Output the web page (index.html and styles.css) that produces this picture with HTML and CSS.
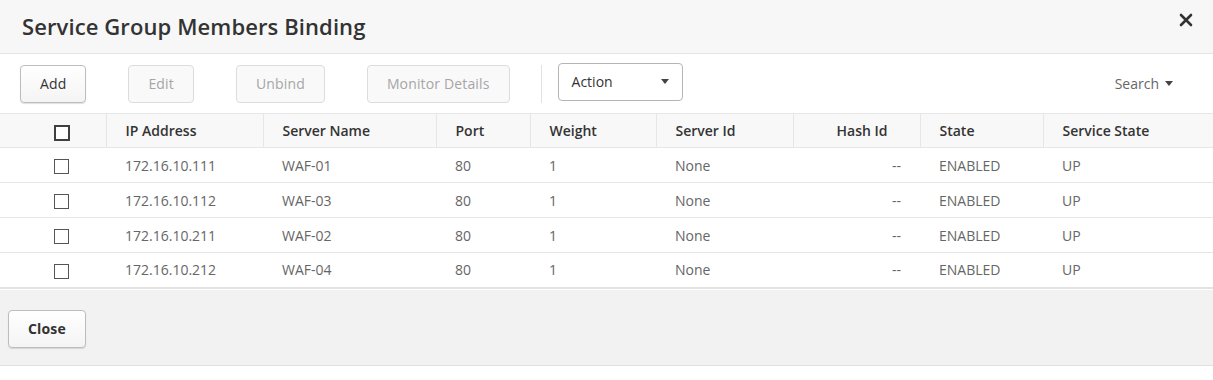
FILE: index.html
```html
<!DOCTYPE html>
<html lang="en">
<head>
    <meta charset="UTF-8">
    <title>Service Group Members Binding</title>
    <link rel="stylesheet" href="styles.css">
</head>
<body>
    <div class="dialog">
        <div class="dialog-header">
            <h1>Service Group Members Binding</h1>
            <svg class="close-icon" width="14" height="14" viewBox="0 0 14 14">
                <path d="M2 2 L12 12 M12 2 L2 12" stroke="#333" stroke-width="2.6" stroke-linecap="round"/>
            </svg>
        </div>
        <div class="toolbar">
            <button class="btn">Add</button>
            <button class="btn" disabled>Edit</button>
            <button class="btn" disabled>Unbind</button>
            <button class="btn" disabled>Monitor Details</button>
            <span class="separator"></span>
            <div class="select">Action<span class="caret"></span></div>
            <div class="search">Search<span class="caret"></span></div>
        </div>
        <table class="grid">
            <colgroup>
                <col class="c-check">
                <col class="c-ip">
                <col class="c-name">
                <col class="c-port">
                <col class="c-weight">
                <col class="c-sid">
                <col class="c-hash">
                <col class="c-state">
                <col>
            </colgroup>
            <thead>
                <tr>
                    <th class="check-cell"><span class="checkbox head"></span></th>
                    <th>IP Address</th>
                    <th>Server Name</th>
                    <th>Port</th>
                    <th>Weight</th>
                    <th>Server Id</th>
                    <th class="num">Hash Id</th>
                    <th>State</th>
                    <th>Service State</th>
                </tr>
            </thead>
            <tbody>
                <tr>
                    <td class="check-cell"><span class="checkbox"></span></td>
                    <td>172.16.10.111</td><td>WAF-01</td><td>80</td><td>1</td><td>None</td><td class="num">--</td><td>ENABLED</td><td>UP</td>
                </tr>
                <tr>
                    <td class="check-cell"><span class="checkbox"></span></td>
                    <td>172.16.10.112</td><td>WAF-03</td><td>80</td><td>1</td><td>None</td><td class="num">--</td><td>ENABLED</td><td>UP</td>
                </tr>
                <tr>
                    <td class="check-cell"><span class="checkbox"></span></td>
                    <td>172.16.10.211</td><td>WAF-02</td><td>80</td><td>1</td><td>None</td><td class="num">--</td><td>ENABLED</td><td>UP</td>
                </tr>
                <tr>
                    <td class="check-cell"><span class="checkbox"></span></td>
                    <td>172.16.10.212</td><td>WAF-04</td><td>80</td><td>1</td><td>None</td><td class="num">--</td><td>ENABLED</td><td>UP</td>
                </tr>
            </tbody>
        </table>
        <div class="dialog-footer">
            <button class="btn strong">Close</button>
        </div>
    </div>
</body>
</html>
```

FILE: styles.css
```css
* {
    margin: 0;
    padding: 0;
    box-sizing: border-box;
}

body {
    background: #fff;
    font-family: 'Open Sans', 'Liberation Sans', sans-serif;
    font-size: 14px;
    color: #333;
}

.dialog-header {
    height: 54px;
    background: #f7f7f7;
    border-bottom: 1px solid #e4e4e4;
    display: flex;
    align-items: center;
    justify-content: space-between;
    padding: 0 20px 2px 22px;
}

.dialog-header h1 {
    font-size: 22px;
    font-weight: 600;
    color: #333;
    letter-spacing: 0.1px;
}

.close-icon {
    margin-top: -12px;
}

.toolbar {
    height: 59px;
    display: flex;
    align-items: center;
    padding: 0 40px 0 20px;
}

.btn {
    height: 38px;
    padding: 0 19px;
    margin-right: 42px;
    font-family: inherit;
    font-size: 14px;
    letter-spacing: 0.15px;
    color: #333;
    background: linear-gradient(#fff, #f4f4f4);
    border: 1px solid #bdbdbd;
    border-radius: 4px;
    box-shadow: 0 1px 1px rgba(0, 0, 0, 0.12);
}

.btn:disabled {
    color: #a6a6a6;
    background: #f9f9f9;
    border-color: #dcdcdc;
    box-shadow: none;
}

.btn.strong {
    font-weight: 700;
    margin: 0;
    padding: 0 19px;
}

.separator {
    width: 1px;
    height: 38px;
    background: #e2e2e2;
    margin: 0 16px 0 -11px;
}

.select {
    width: 125px;
    height: 38px;
    margin-top: -4px;
    border: 1px solid #b5b5b5;
    border-radius: 4px;
    display: flex;
    align-items: center;
    justify-content: space-between;
    padding: 0 13px;
    color: #333;
}

.caret {
    width: 0;
    height: 0;
    border-left: 4px solid transparent;
    border-right: 4px solid transparent;
    border-top: 5px solid #444;
}

.search {
    margin-left: auto;
    color: #666;
    display: flex;
    align-items: center;
    gap: 6px;
}

.grid {
    width: 100%;
    border-collapse: collapse;
    table-layout: fixed;
    border-bottom: 2px solid #e3e3e3;
}

.c-check { width: 106px; }
.c-ip { width: 157px; }
.c-name { width: 173px; }
.c-port { width: 94px; }
.c-weight { width: 126px; }
.c-sid { width: 137px; }
.c-hash { width: 127px; }
.c-state { width: 123px; }

.grid th,
.grid td {
    height: 35px;
    padding: 0 19px;
    text-align: left;
    white-space: nowrap;
}

.grid th {
    height: 34px;
    background: #f8f8f8;
    font-weight: 600;
    color: #333;
    border: 1px solid #e6e6e6;
}

.grid th:first-child {
    border-left: none;
}

.grid th:last-child {
    border-right: none;
}

.grid td {
    color: #666;
    border-bottom: 1px solid #e6e6e6;
}

.grid th.num {
    text-align: right;
    padding-right: 32px;
}

.grid td.num {
    text-align: right;
    padding-right: 19px;
}

.grid .check-cell {
    text-align: center;
    padding: 0 0 0 16px;
}

.checkbox {
    display: inline-block;
    width: 15px;
    height: 15px;
    border: 1.5px solid #555;
    background: #fff;
    vertical-align: middle;
}

.checkbox.head {
    width: 16px;
    height: 16px;
    border: 2px solid #404040;
    margin: 2px 0 0 2px;
}

.dialog-footer {
    margin-top: 1px;
    height: 76px;
    background: #f2f2f2;
    border-bottom: 1px solid #e0e0e0;
    display: flex;
    align-items: center;
    padding: 3px 8px 0;
}
```
